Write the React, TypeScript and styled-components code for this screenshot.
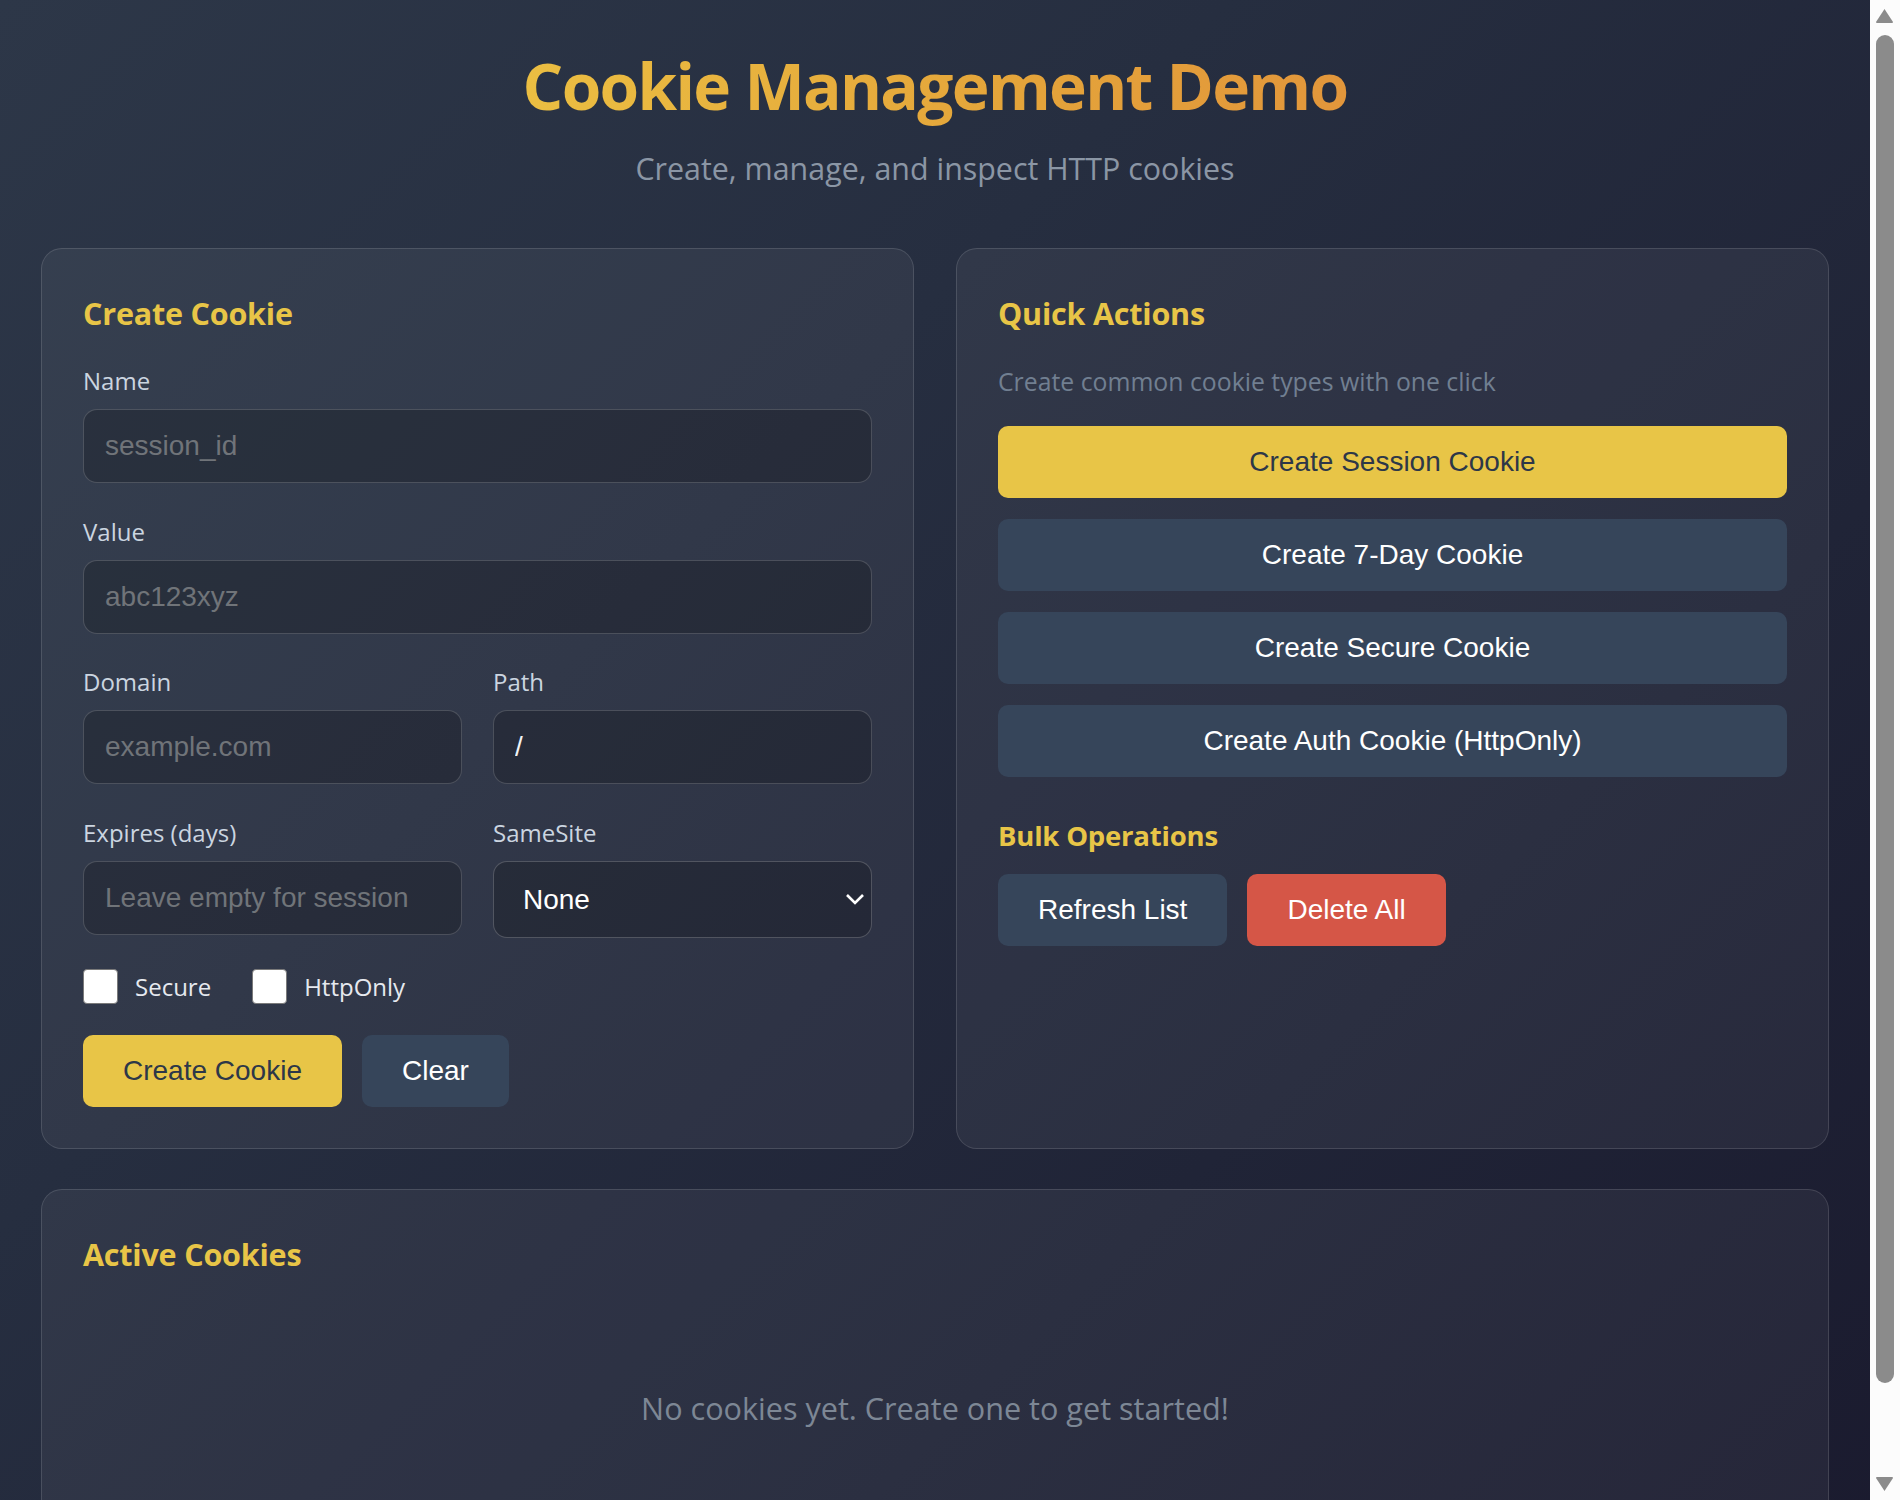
import styled, { createGlobalStyle } from 'styled-components'

const GlobalStyle = createGlobalStyle`
  html, body {
    margin: 0;
    padding: 0;
  }

  body {
    min-height: 100vh;
    background: linear-gradient(135deg, #2d3748 0%, #262e40 35%, #1a1a2e 100%);
    font-family: "Open Sans", "Noto Sans", sans-serif;
    color: #e2e8f0;
  }

  * {
    box-sizing: border-box;
  }
`

const Page = styled.div`
  width: 1870px;
  padding: 39px 41px 56px;
`

const Header = styled.header`
  text-align: center;
  margin-bottom: 58px;
`

const Title = styled.h1`
  display: inline-block;
  margin: 0 0 16px;
  font-size: 64px;
  font-weight: 700;
  letter-spacing: -1.7px;
  line-height: 93px;
  background: linear-gradient(90deg, #ebbe42 0%, #e4a43a 60%, #e2963b 100%);
  -webkit-background-clip: text;
  background-clip: text;
  color: transparent;
`

const Subtitle = styled.p`
  margin: 0;
  font-size: 30.4px;
  line-height: 42px;
  color: #8b96a5;
`

const Grid = styled.div`
  display: grid;
  grid-template-columns: 1fr 1fr;
  gap: 42px;
  margin-bottom: 40px;
`

const Card = styled.section`
  background: rgba(255, 255, 255, 0.05);
  border: 1px solid rgba(255, 255, 255, 0.13);
  border-radius: 21px;
  padding: 41px;
`

const SectionTitle = styled.h2`
  margin: 0 0 28px;
  font-size: 30.5px;
  letter-spacing: -0.2px;
  line-height: 46px;
  font-weight: 700;
  color: #e8c547;
`

const SubTitle = styled.h3`
  margin: 38px 0 17px;
  font-size: 27.5px;
  letter-spacing: -0.2px;
  line-height: 42px;
  font-weight: 700;
  color: #e8c547;
`

const Field = styled.div`
  margin-bottom: 31.5px;
`

const FieldRow = styled.div`
  display: grid;
  grid-template-columns: 1fr 1fr;
  gap: 31px;
`

const Label = styled.label`
  display: block;
  margin-bottom: 11px;
  font-size: 24px;
  line-height: 34px;
  color: #cbd5e0;
`

const Input = styled.input`
  display: block;
  width: 100%;
  height: 74px;
  padding: 0 21px;
  font-family: "Liberation Sans", Arial, sans-serif;
  font-size: 28px;
  color: #f1f3f6;
  background: rgba(0, 0, 0, 0.2);
  border: 1px solid rgba(255, 255, 255, 0.17);
  border-radius: 14px;
  outline: none;

  &::placeholder {
    color: #707479;
  }
`

const SelectWrap = styled.div`
  position: relative;
`

const Select = styled.select`
  display: block;
  width: 100%;
  height: 77px;
  padding: 0 60px 0 29px;
  font-family: "Liberation Sans", Arial, sans-serif;
  font-size: 28px;
  color: #ffffff;
  background: rgba(0, 0, 0, 0.2);
  border: 1px solid rgba(255, 255, 255, 0.2);
  border-radius: 14px;
  appearance: none;
  outline: none;
`

const Chevron = styled.svg`
  position: absolute;
  right: 7px;
  top: 50%;
  transform: translateY(-50%);
  pointer-events: none;
`

const CheckRow = styled.div`
  display: flex;
  align-items: center;
  gap: 41px;
  margin-bottom: 31px;
`

const CheckLabel = styled.label`
  display: flex;
  align-items: center;
  gap: 17px;
  font-size: 24px;
  line-height: 35px;
  color: #e6e9ef;
`

const Checkbox = styled.input`
  appearance: none;
  margin: 0;
  width: 35px;
  height: 35px;
  background: #ffffff;
  border: 1px solid #7a7a7a;
  border-radius: 4px;
`

const ButtonRow = styled.div`
  display: flex;
  gap: 20px;
`

const Button = styled.button<{ $variant?: 'primary' | 'secondary' | 'danger'; $block?: boolean }>`
  display: block;
  width: ${(p) => (p.$block ? '100%' : 'auto')};
  height: 72px;
  padding: 0 40px;
  font-family: "Liberation Sans", Arial, sans-serif;
  font-size: 28px;
  border: none;
  border-radius: 10px;
  cursor: pointer;
  color: ${(p) => (p.$variant === 'primary' ? '#2d3748' : '#ffffff')};
  background: ${(p) =>
    p.$variant === 'primary' ? '#e8c547' : p.$variant === 'danger' ? '#d55647' : '#36455a'};
`

const QuickText = styled.p`
  margin: 0 0 28px;
  font-size: 24.8px;
  line-height: 34px;
  color: #717f91;
`

const QuickList = styled.div`
  display: flex;
  flex-direction: column;
  gap: 21px;
`

const Empty = styled.p`
  margin: 0;
  padding: 84px 0;
  text-align: center;
  font-size: 30.6px;
  line-height: 38px;
  color: #7d8795;
`

/* the browser scrollbar seen in the screenshot */
const Scrollbar = styled.aside`
  position: fixed;
  top: 0;
  right: 0;
  width: 30px;
  height: 100vh;
  display: flex;
  flex-direction: column;
  background: #fcfcfc;
`

const ScrollArrow = styled.svg`
  display: block;
  flex: none;
`

const ScrollThumb = styled.div`
  margin: 3px 0 0 6px;
  width: 18px;
  height: 1348px;
  border-radius: 9px;
  background: #8b8b8b;
`

const ScrollSpacer = styled.div`
  flex: 1;
`

const App = () => {
  return (
    <>
      <GlobalStyle />
      <Page>
        <Header>
          <Title>Cookie Management Demo</Title>
          <Subtitle>Create, manage, and inspect HTTP cookies</Subtitle>
        </Header>

        <Grid>
          <Card>
            <SectionTitle>Create Cookie</SectionTitle>
            <Field>
              <Label>Name</Label>
              <Input placeholder="session_id" />
            </Field>
            <Field>
              <Label>Value</Label>
              <Input placeholder="abc123xyz" />
            </Field>
            <FieldRow>
              <Field>
                <Label>Domain</Label>
                <Input placeholder="example.com" />
              </Field>
              <Field>
                <Label>Path</Label>
                <Input defaultValue="/" />
              </Field>
            </FieldRow>
            <FieldRow>
              <Field>
                <Label>Expires (days)</Label>
                <Input placeholder="Leave empty for session" />
              </Field>
              <Field>
                <Label>SameSite</Label>
                <SelectWrap>
                  <Select defaultValue="None">
                    <option>None</option>
                    <option>Lax</option>
                    <option>Strict</option>
                  </Select>
                  <Chevron width="20" height="14" viewBox="0 0 20 14">
                    <path d="M2 3 L10 11 L18 3" fill="none" stroke="#ffffff" strokeWidth="2.6" />
                  </Chevron>
                </SelectWrap>
              </Field>
            </FieldRow>
            <CheckRow>
              <CheckLabel>
                <Checkbox type="checkbox" />
                Secure
              </CheckLabel>
              <CheckLabel>
                <Checkbox type="checkbox" />
                HttpOnly
              </CheckLabel>
            </CheckRow>
            <ButtonRow>
              <Button $variant="primary">Create Cookie</Button>
              <Button>Clear</Button>
            </ButtonRow>
          </Card>

          <Card>
            <SectionTitle>Quick Actions</SectionTitle>
            <QuickText>Create common cookie types with one click</QuickText>
            <QuickList>
              <Button $variant="primary" $block>
                Create Session Cookie
              </Button>
              <Button $block>Create 7-Day Cookie</Button>
              <Button $block>Create Secure Cookie</Button>
              <Button $block>Create Auth Cookie (HttpOnly)</Button>
            </QuickList>
            <SubTitle>Bulk Operations</SubTitle>
            <ButtonRow>
              <Button>Refresh List</Button>
              <Button $variant="danger">Delete All</Button>
            </ButtonRow>
          </Card>
        </Grid>

        <Card>
          <SectionTitle>Active Cookies</SectionTitle>
          <Empty>No cookies yet. Create one to get started!</Empty>
        </Card>
      </Page>

      <Scrollbar aria-hidden="true">
        <ScrollArrow width="30" height="32" viewBox="0 0 30 32">
          <path d="M14.5 9 L23 22 Q23 23 22 23 L7 23 Q6 23 6 22 Z" fill="#8b8b8b" />
        </ScrollArrow>
        <ScrollThumb />
        <ScrollSpacer />
        <ScrollArrow width="30" height="32" viewBox="0 0 30 32">
          <path d="M14.5 23 L23 10 Q23 9 22 9 L7 9 Q6 9 6 10 Z" fill="#8b8b8b" />
        </ScrollArrow>
      </Scrollbar>
    </>
  )
}

export default App
